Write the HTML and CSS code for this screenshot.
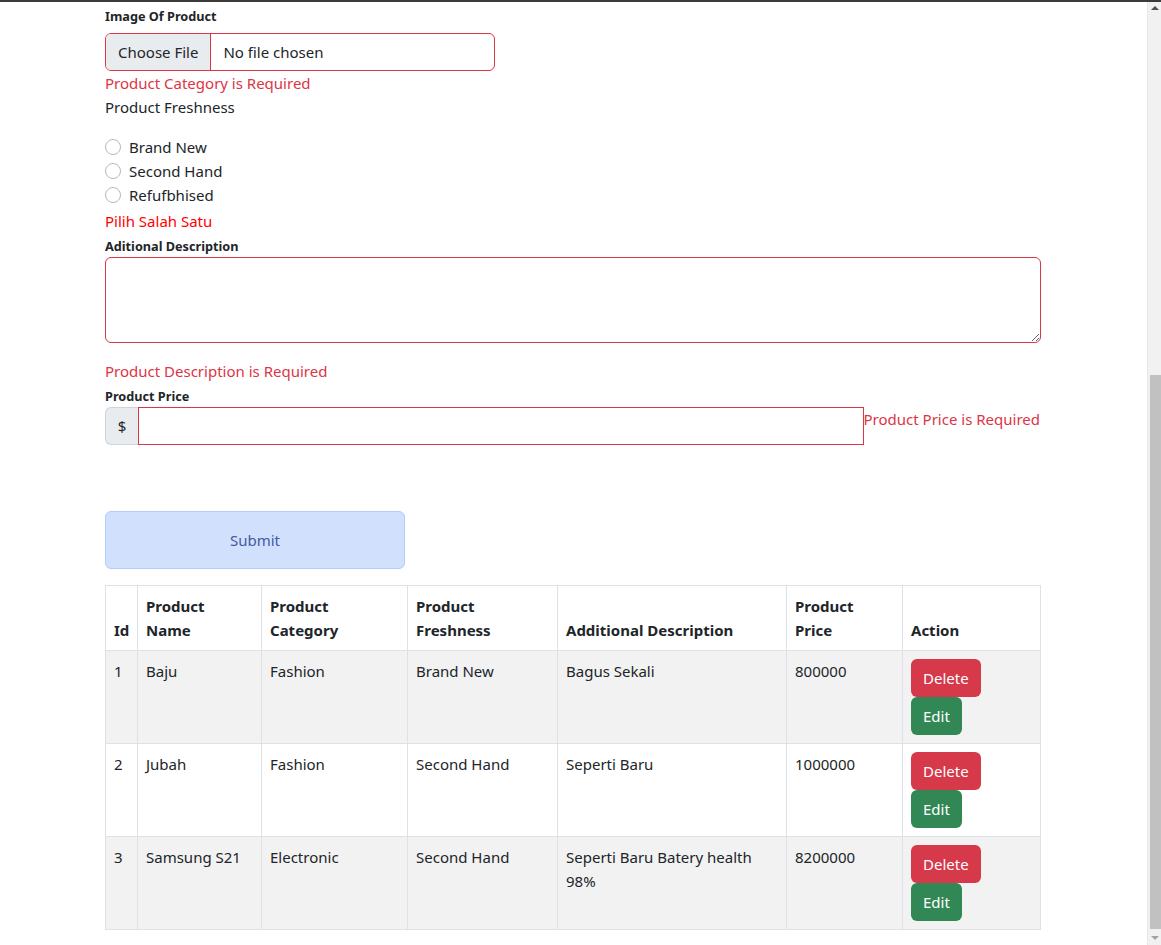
FILE: index.html
```html
<!DOCTYPE html>
<html lang="en">
<head>
<meta charset="utf-8">
<title>Product Form</title>
<link rel="stylesheet" href="styles.css">
</head>
<body>
<div class="topbar"></div>
<main class="container">
  <form class="product-form">
    <label class="form-label label-image">Image Of Product</label>
    <label class="file-field">
      <span class="file-btn">Choose File</span>
      <span class="file-name">No file chosen</span>
    </label>
    <div class="invalid">Product Category is Required</div>

    <div class="plain-label">Product Freshness</div>
    <div class="radio-group">
      <label class="radio"><input type="radio" name="fresh"><span>Brand New</span></label>
      <label class="radio"><input type="radio" name="fresh"><span>Second Hand</span></label>
      <label class="radio"><input type="radio" name="fresh"><span>Refufbhised</span></label>
    </div>
    <div class="invalid-red">Pilih Salah Satu</div>

    <label class="form-label">Aditional Description</label>
    <textarea class="textarea"></textarea>
    <div class="invalid desc-error">Product Description is Required</div>

    <label class="form-label">Product Price</label>
    <div class="input-group">
      <span class="addon">$</span>
      <input class="price-input" type="text">
      <div class="invalid price-error">Product Price is Required</div>
    </div>

    <button type="button" class="btn-submit">Submit</button>
  </form>

  <table class="data-table">
    <colgroup>
      <col style="width:32px">
      <col style="width:124px">
      <col style="width:146px">
      <col style="width:150px">
      <col style="width:229px">
      <col style="width:116px">
      <col style="width:138px">
    </colgroup>
    <thead>
      <tr>
        <th>Id</th>
        <th>Product Name</th>
        <th>Product Category</th>
        <th>Product Freshness</th>
        <th>Additional Description</th>
        <th>Product Price</th>
        <th>Action</th>
      </tr>
    </thead>
    <tbody>
      <tr class="striped">
        <td>1</td><td>Baju</td><td>Fashion</td><td>Brand New</td><td>Bagus Sekali</td><td>800000</td>
        <td><div class="actions"><button type="button" class="btn btn-danger">Delete</button><button type="button" class="btn btn-success">Edit</button></div></td>
      </tr>
      <tr>
        <td>2</td><td>Jubah</td><td>Fashion</td><td>Second Hand</td><td>Seperti Baru</td><td>1000000</td>
        <td><div class="actions"><button type="button" class="btn btn-danger">Delete</button><button type="button" class="btn btn-success">Edit</button></div></td>
      </tr>
      <tr class="striped">
        <td>3</td><td>Samsung S21</td><td>Electronic</td><td>Second Hand</td><td>Seperti Baru Batery health 98%</td><td>8200000</td>
        <td><div class="actions"><button type="button" class="btn btn-danger">Delete</button><button type="button" class="btn btn-success">Edit</button></div></td>
      </tr>
    </tbody>
  </table>
</main>
<div class="scrollbar">
  <span class="arrow-up"></span>
  <span class="thumb"></span>
  <span class="arrow-down"></span>
</div>
</body>
</html>
```
FILE: styles.css
```css
* { box-sizing: border-box; }
html, body { margin: 0; padding: 0; background: #fff; }
body {
  font-family: "Segoe UI", "Noto Sans", "Open Sans", sans-serif;
  font-size: 15px;
  line-height: 24px;
  color: #212529;
  overflow: hidden;
  padding-right: 15px;
}
.topbar { height: 2px; background: #3b3b3b; margin-right: -15px; position: relative; z-index: 3; }
.container { width: 936px; margin: 0 auto; }
.product-form { display: flex; flex-direction: column; align-items: flex-start; }
.form-label { display: block; font-size: 12.7px; font-weight: 700; line-height: 22px; padding-top: 2px; }
.label-image { margin-top: 1px; margin-bottom: 6px; }
.file-field {
  display: flex; align-items: stretch;
  width: 390px; height: 38px;
  border: 1px solid #dc3545; border-radius: 6px; overflow: hidden;
}
.file-btn {
  display: flex; align-items: center;
  padding: 0 12px; background: #e9ecef; border-right: 1px solid #dc3545;
}
.file-name { display: flex; align-items: center; padding-left: 12px; }
.invalid { color: #dc3545; }
.invalid-red { color: #ff0000; margin-top: 2px; }
.plain-label { margin-bottom: 16px; }
.radio-group { display: flex; flex-direction: column; }
.radio { display: flex; align-items: center; height: 24px; }
.radio input {
  appearance: none; -webkit-appearance: none;
  width: 16px; height: 16px; margin: 0 8px 0 0;
  border: 1px solid #b8b8b8; border-radius: 50%; background: #fff;
}
.textarea {
  display: block; width: 936px; height: 86px;
  border: 1px solid #dc3545; border-radius: 6px;
  font: inherit; padding: 6px 12px; margin: 0;
}
.desc-error { margin-top: 16px; }
.input-group { display: flex; width: 936px; height: 38px; }
.addon {
  display: flex; align-items: center; justify-content: center;
  width: 33px; background: #e9ecef; border: 1px solid #ced4da; border-right: 0;
  border-radius: 6px 0 0 6px;
}
.price-input {
  flex: 1; min-width: 0; height: 38px; margin: 0;
  border: 1px solid #dc3545; border-radius: 0; font: inherit; padding: 6px 12px;
}
.price-error { white-space: nowrap; padding-right: 1px; }
.btn-submit {
  margin-top: 66px; width: 300px; height: 58px;
  background: #d1e1fd; border: 1px solid #b1cdfb; border-radius: 6px;
  color: #44599f; font: inherit;
}
.data-table {
  margin-top: 16px; width: 935px; table-layout: fixed;
  border-collapse: collapse;
}
.data-table th, .data-table td {
  border: 1px solid #dee2e6; padding: 8px; text-align: left;
}
.data-table th { vertical-align: bottom; font-weight: 700; }
.data-table td { vertical-align: top; height: 93px; }
.data-table tr.striped td { background: #f2f2f2; }
.actions { display: flex; flex-direction: column; align-items: flex-start; }
.btn {
  height: 38px; padding: 0 12px; border: 0; border-radius: 6px;
  font: inherit; color: #fff;
}
.btn-danger { background: #d6394a; }
.btn-success { background: #328855; }
.scrollbar {
  position: fixed; top: 2px; right: 0; bottom: 0; width: 14px;
  background: #f1f1f1; border-left: 1px solid #e8e8e8;
}
.thumb {
  position: absolute; left: 2px; right: 0; top: 373px; bottom: 16px;
  background: #c1c1c1;
}
.arrow-up {
  position: absolute; top: 4px; left: 3px;
  border-left: 4px solid transparent; border-right: 4px solid transparent;
  border-bottom: 4px solid #505050;
}
.arrow-down {
  position: absolute; bottom: 5px; left: 3px;
  border-left: 4px solid transparent; border-right: 4px solid transparent;
  border-top: 4px solid #a3a3a3;
}
```
